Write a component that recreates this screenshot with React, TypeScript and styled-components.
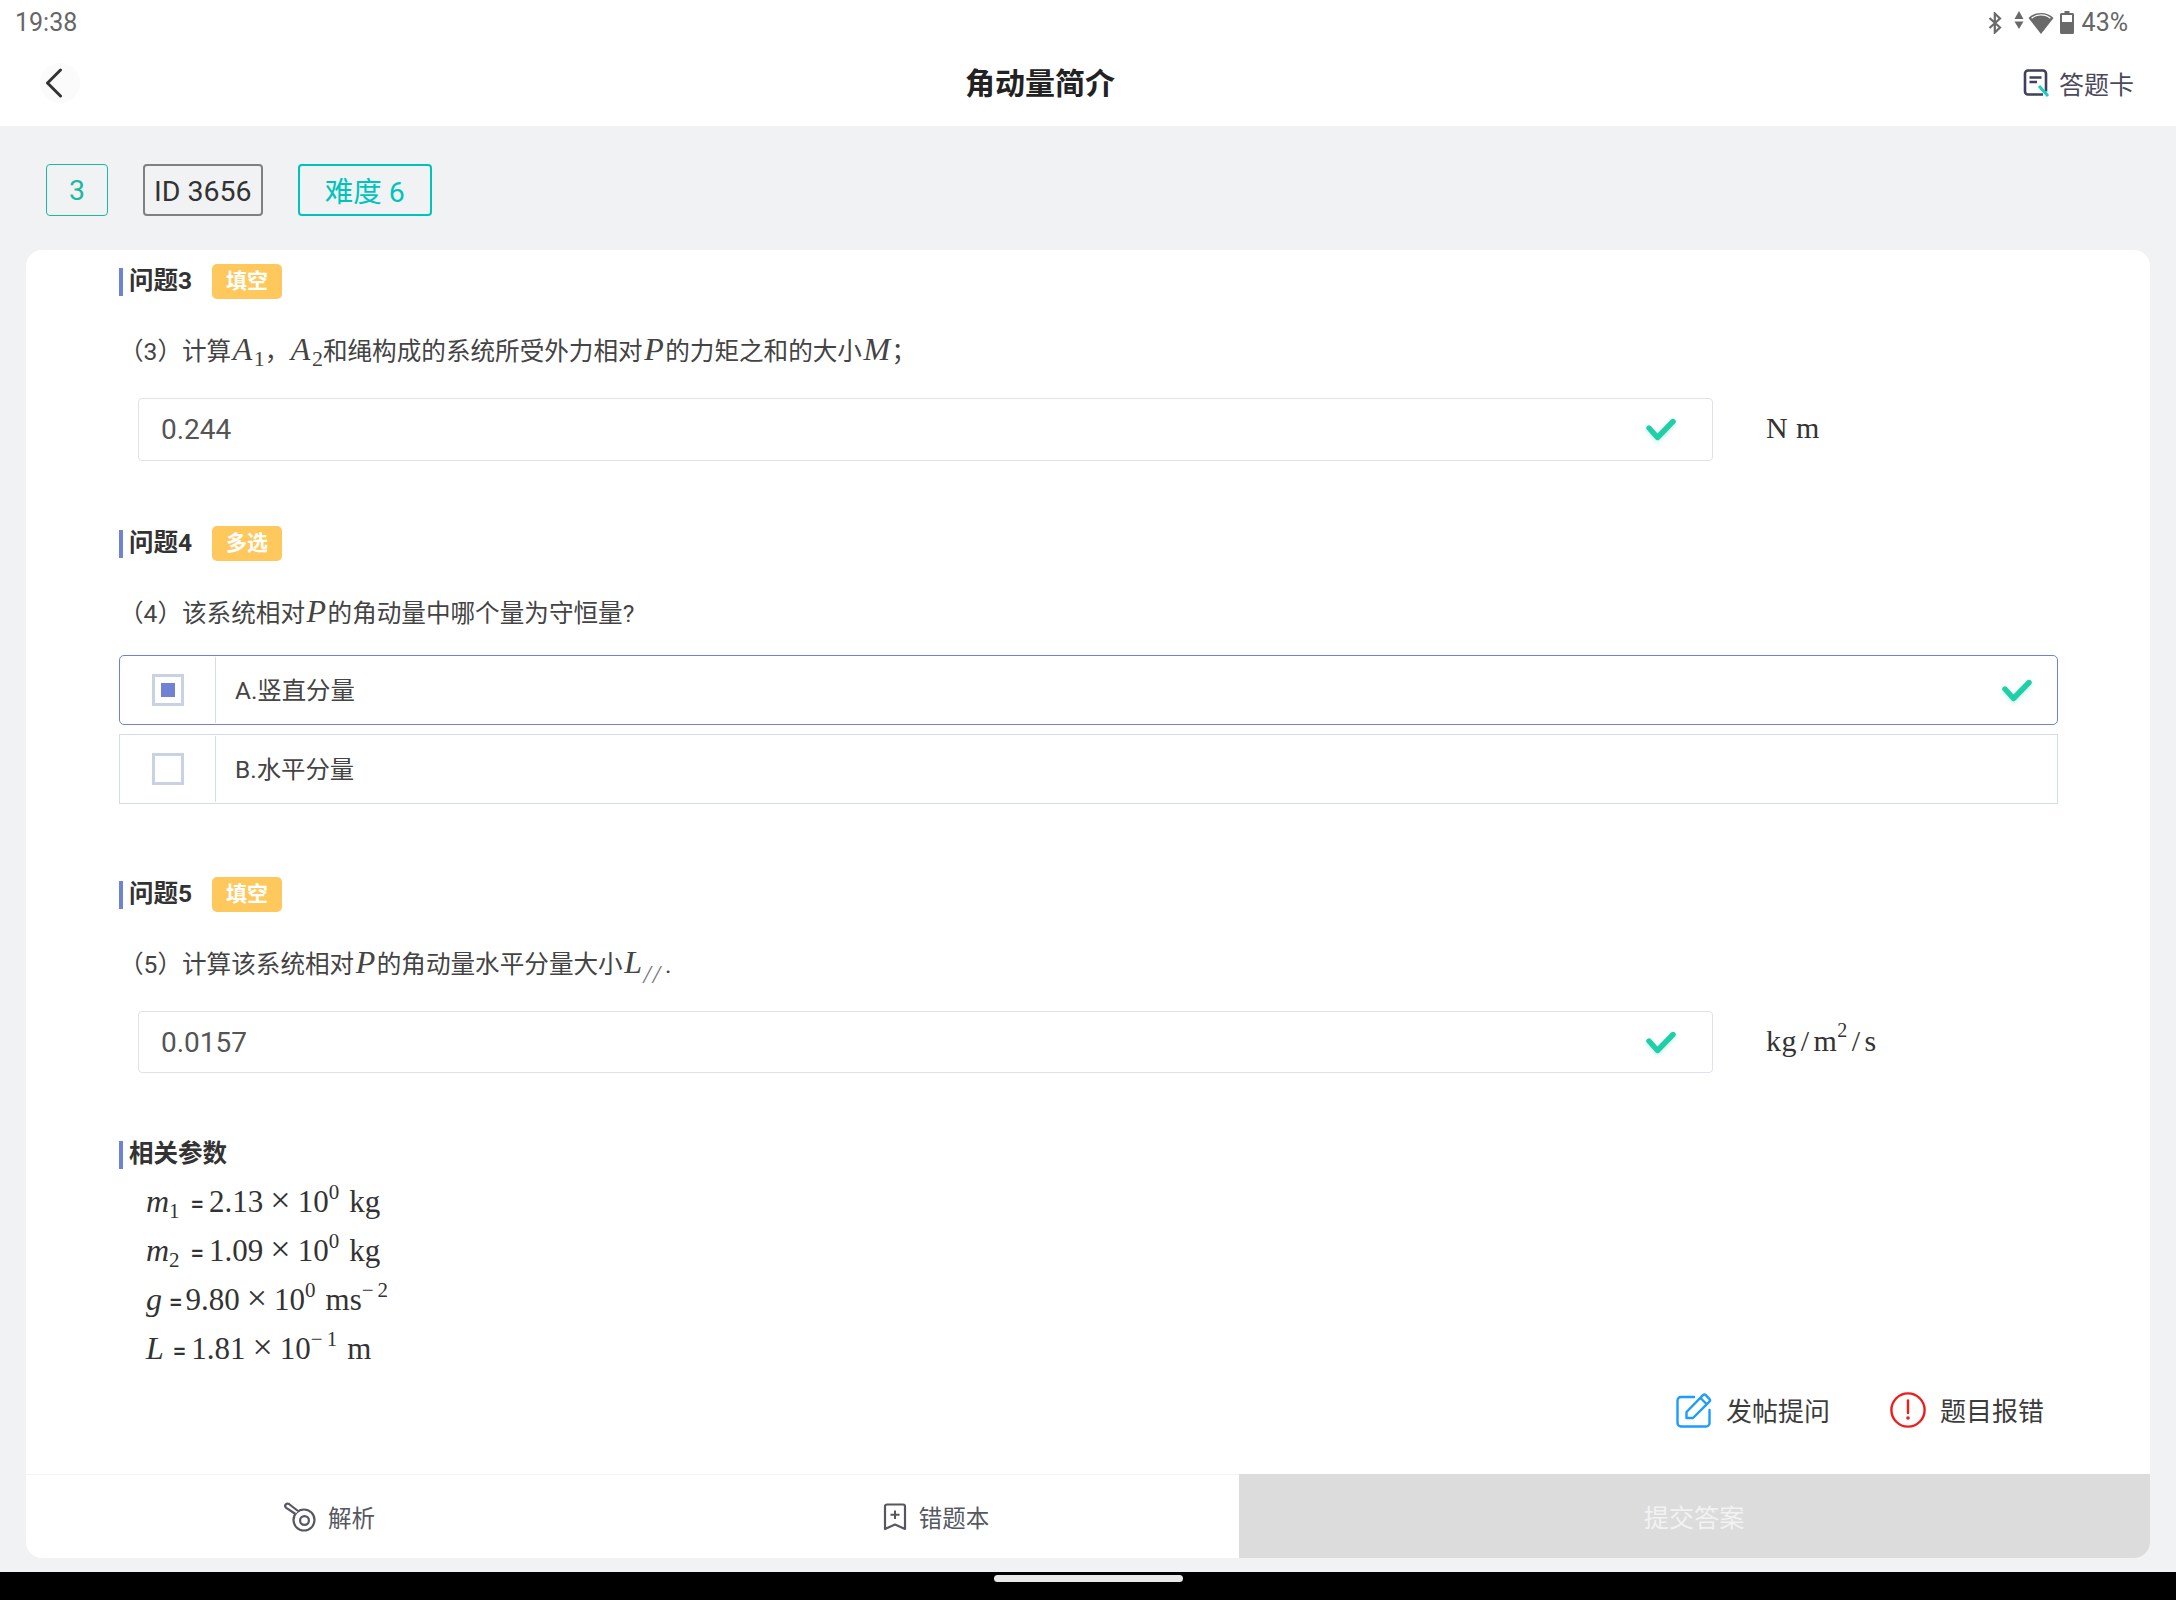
import React from "react";
import styled, { createGlobalStyle } from "styled-components";

const sansStack = `Roboto, "Noto Sans CJK SC", sans-serif`;
const serifStack = `"Liberation Serif", "Noto Sans CJK SC", serif`;
const accent = "#6f82d4";
const lineGrey = "#d5dbe8";

const GlobalStyle = createGlobalStyle`
  html, body {
    margin: 0;
    padding: 0;
    background: #f1f2f4;
  }
  body {
    font-family: ${sansStack};
    color: #444;
  }
  * {
    box-sizing: border-box;
  }
`;

const Page = styled.div`
  width: 2176px;
  height: 1600px;
  display: flex;
  flex-direction: column;
  overflow: hidden;
`;

const Top = styled.header`
  background: #fff;
  height: 126px;
  flex-shrink: 0;
`;

const StatusBar = styled.div`
  height: 40px;
  padding: 5px 48px 0 15px;
  display: flex;
  align-items: center;
  justify-content: space-between;
  font-size: 25px;
  color: #666;
`;

const StatusIcons = styled.div`
  display: flex;
  align-items: center;
`;

const StatusText = styled.span`
  margin-left: 8px;
`;

const NavRow = styled.div`
  height: 86px;
  display: grid;
  grid-template-columns: 1fr auto 1fr;
  align-items: center;
  padding: 0 42px 0 40px;
`;

const BackButton = styled.div`
  width: 40px;
  height: 40px;
  border-radius: 50%;
  background: #fbfbfb;
  display: flex;
  align-items: center;
  padding-left: 5px;
`;

const Title = styled.h1`
  margin: 2px 82px 0 -12px;
  font-size: 30px;
  line-height: 40px;
  font-weight: 700;
  color: #222;
`;

const CardLink = styled.div`
  justify-self: end;
  display: flex;
  align-items: center;
  gap: 9px;
  font-size: 25px;
  color: #4a4a5c;
`;

const Main = styled.main`
  flex: 1;
  display: flex;
  flex-direction: column;
  padding: 38px 26px 14px;
  min-height: 0;
`;

const Tags = styled.div`
  display: flex;
  gap: 35px;
  padding-left: 20px;
  margin-bottom: 34px;
`;

const Tag = styled.div<{ $color: string; $border: number; $pad: number; $top?: number; $bottom?: number }>`
  height: 52px;
  padding: ${(p) => p.$top ?? 0}px ${(p) => p.$pad}px ${(p) => p.$bottom ?? 0}px;
  display: flex;
  align-items: center;
  border: ${(p) => p.$border}px solid ${(p) => (p.$color === "#333" ? "#808080" : p.$color)};
  border-radius: 4px;
  color: ${(p) => p.$color};
  font-size: 28.5px;
`;

const Card = styled.section`
  flex: 1;
  min-height: 0;
  display: flex;
  flex-direction: column;
  background: #fff;
  border-radius: 16px;
  overflow: hidden;
  padding-top: 14px;
`;

const Block = styled.div<{ $top?: number }>`
  margin: ${(p) => p.$top ?? 0}px 92px 0 93px;
`;

const Heading = styled.div`
  height: 35px;
  display: flex;
  align-items: center;
  gap: 20px;
`;

const HeadingText = styled.h2`
  margin: 0;
  height: 28px;
  border-left: 4px solid ${accent};
  padding-left: 6px;
  font-size: 24.5px;
  line-height: 25px;
  font-weight: 700;
  color: #333;
`;

const Badge = styled.span`
  width: 70px;
  height: 35px;
  border-radius: 5px;
  background: #ffc85c;
  color: #fff;
  font-size: 21px;
  font-weight: 700;
  padding-bottom: 5px;
  display: flex;
  align-items: center;
  justify-content: center;
`;

const Prompt = styled.p`
  margin: 33px 0 0;
  height: 34px;
  font-size: 24.6px;
  line-height: 34px;
  color: #444;
  white-space: nowrap;
`;

const MathVar = styled.i`
  font-family: ${serifStack};
  font-size: 32px;
  font-style: italic;
  margin: 0 1.5px;
`;

const Sub = styled.sub`
  font-family: ${serifStack};
  font-size: 22px;
  font-style: normal;
  line-height: 0;
  vertical-align: -6px;
`;

const ParallelSub = styled(Sub)`
  font-style: italic;
  color: #777;
  font-size: 26px;
  vertical-align: -10px;
  letter-spacing: 2px;
  margin-right: 3px;
`;

const AnswerRow = styled.div`
  display: flex;
  align-items: center;
  margin: 32px 0 0 19px;
`;

const AnswerBox = styled.div<{ $height: number }>`
  width: 1575px;
  height: ${(p) => p.$height}px;
  border: 1px solid #dfe2e8;
  border-radius: 4px;
  padding: 0 36px 0 22px;
  display: flex;
  align-items: center;
  justify-content: space-between;
  font-size: 28px;
  color: #555;
`;

const Unit = styled.div`
  margin-left: 53px;
  margin-bottom: 3px;
  font-family: ${serifStack};
  font-size: 30px;
  letter-spacing: 0.4px;
  color: #333;
`;

const UnitSup = styled.sup`
  font-size: 20px;
  line-height: 0;
  vertical-align: 14px;
`;

const Slash = styled.span`
  margin: 0 4px;
`;

const Options = styled.div`
  margin-top: 27px;
  display: flex;
  flex-direction: column;
  gap: 9px;
`;

const Option = styled.div<{ $active?: boolean }>`
  height: 70px;
  display: flex;
  align-items: center;
  border: 1px solid ${(p) => (p.$active ? accent : lineGrey)};
  border-radius: ${(p) => (p.$active ? 5 : 0)}px;
  font-size: 24.4px;
  color: #444;
`;

const OptionMark = styled.div`
  width: 96px;
  height: 66px;
  flex-shrink: 0;
  border-right: 1px solid ${lineGrey};
  display: flex;
  align-items: center;
  justify-content: center;
`;

const Checkbox = styled.span`
  width: 32px;
  height: 32px;
  border: 3.5px solid #c9d2e2;
  display: flex;
  align-items: center;
  justify-content: center;
`;

const CheckboxFill = styled.span`
  width: 14px;
  height: 14px;
  background: ${accent};
`;

const OptionLabel = styled.span`
  flex: 1;
  padding: 0 0 4px 19px;
`;

const OptionCheck = styled.span`
  display: flex;
  margin-right: 25px;
`;

const Params = styled.div`
  margin: 8px 0 0 27px;
`;

const ParamLine = styled.div`
  height: 49px;
  line-height: 49px;
  font-family: ${serifStack};
  font-size: 31px;
  color: #333;
  white-space: nowrap;
`;

const ParamVar = styled.i`
  font-size: 32px;
`;

const Equals = styled.span<{ $left: number; $right: number }>`
  font-family: ${sansStack};
  font-size: 24px;
  font-weight: 500;
  margin: 0 ${(p) => p.$right}px 0 ${(p) => p.$left}px;
`;

const Times = styled.span`
  font-size: 36px;
  line-height: 0;
  margin: 0 7px;
`;

const Sup = styled.sup`
  font-size: 21px;
  line-height: 0;
  vertical-align: 13px;
`;

const ExponentMinus = styled.span`
  letter-spacing: 4px;
`;

const ParamSub = styled.sub`
  font-size: 21px;
  line-height: 0;
  vertical-align: -6px;
`;

const ParamUnit = styled.span`
  margin-left: 10px;
`;

const Actions = styled.div`
  margin-top: 19px;
  padding-right: 106px;
  display: flex;
  justify-content: flex-end;
  gap: 60px;
`;

const ActionItem = styled.div`
  display: flex;
  align-items: center;
  gap: 14px;
  height: 36px;
  font-size: 26px;
  color: #3c3c3c;
`;

const ActionLabel = styled.span`
  margin-bottom: 2px;
`;

const BottomBar = styled.div`
  margin-top: auto;
  height: 84px;
  flex-shrink: 0;
  display: grid;
  grid-template-columns: 606px 607px 1fr;
  border-top: 1px solid #f1f4f8;
`;

const BottomItem = styled.div`
  display: flex;
  align-items: center;
  justify-content: center;
  gap: 12px;
  padding-left: 1px;
  font-size: 23.5px;
  color: #55585f;
`;

const SubmitButton = styled.div`
  margin-top: -1px;
  background: #dcdcdc;
  color: #f2f2f2;
  font-size: 25.2px;
  display: flex;
  align-items: center;
  justify-content: center;
  padding-right: 1px;
`;

const NavBar = styled.div`
  height: 28px;
  flex-shrink: 0;
  background: #000;
  padding-top: 3px;
  display: flex;
  justify-content: center;
`;

const HomePill = styled.div`
  width: 189px;
  height: 7px;
  border-radius: 4px;
  background: #e8e8e8;
`;

const ShadowSvg = styled.svg`
  filter: drop-shadow(0 2px 2px rgba(31, 207, 168, 0.25));
  display: block;
`;

const CheckMark = () => (
  <ShadowSvg width="30" height="23" viewBox="0 0 30 23">
    <polyline points="3,10 11.5,19.5 27,3.5" fill="none" stroke="#1fcfa8" strokeWidth="5.4" strokeLinecap="round" strokeLinejoin="round" />
  </ShadowSvg>
);

const BluetoothIcon = () => (
  <svg width="14" height="22" viewBox="0 0 14 22">
    <polyline points="1.5,6 12,15.5 6.8,20.5 6.8,1.5 12,6.5 1.5,16" fill="none" stroke="#6a6a6a" strokeWidth="2.2" />
  </svg>
);

const DataArrows = () => (
  <svg width="10" height="18" viewBox="0 0 10 18" style={{ marginLeft: 12, marginTop: -5 }}>
    <path d="M5 0 L9.5 8 H0.5 Z M0.5 10.5 H9.5 L5 18 Z" fill="#6a6a6a" />
  </svg>
);

const WifiIcon = () => (
  <svg width="26" height="22" viewBox="0 0 26 22" style={{ marginLeft: 4 }}>
    <path d="M0.5 6 C7 -0.8 19 -0.8 25.5 6 L13 22 Z" fill="#6a6a6a" />
    <path d="M3.6 6.2 C9 1.8 17 1.8 22.4 6.2" fill="none" stroke="#fff" strokeWidth="1.2" />
  </svg>
);

const BatteryIcon = () => (
  <svg width="14" height="23" viewBox="0 0 14 23" style={{ marginLeft: 6 }}>
    <path d="M4.5 0 H9.5 V2 H12.5 A1.5 1.5 0 0 1 14 3.5 V21.5 A1.5 1.5 0 0 1 12.5 23 H1.5 A1.5 1.5 0 0 1 0 21.5 V3.5 A1.5 1.5 0 0 1 1.5 2 H4.5 Z" fill="#6a6a6a" />
    <rect x="2" y="4" width="10" height="7" fill="#fff" />
  </svg>
);

const BackChevron = () => (
  <svg width="18" height="30" viewBox="0 0 18 30">
    <polyline points="15.5,2 2.5,15 15.5,28" fill="none" stroke="#333" strokeWidth="3" strokeLinecap="round" strokeLinejoin="round" />
  </svg>
);

const AnswerCardIcon = () => (
  <svg width="27" height="28" viewBox="0 0 27 28">
    <path d="M20 25.5 H5 A3 3 0 0 1 2 22.5 V4.5 A3 3 0 0 1 5 1.5 H20 A3 3 0 0 1 23 4.5 V22.5" fill="none" stroke="#3f3f5e" strokeWidth="2.6" />
    <path d="M6.5 8.5 H18.5 M6.5 13 H14" stroke="#3f3f5e" strokeWidth="2.4" />
    <path d="M16 17 L25 27" stroke="#17cfc0" strokeWidth="3" />
  </svg>
);

const PostIcon = () => (
  <svg width="36" height="36" viewBox="0 0 36 36">
    <path d="M18 5 H5 A3.5 3.5 0 0 0 1.5 8.5 V31 A3.5 3.5 0 0 0 5 34.5 H30 A3.5 3.5 0 0 0 33.5 31 V18" fill="none" stroke="#1e9bff" strokeWidth="2.4" strokeLinecap="round" />
    <path d="M10.5 20 L27 3.2 A2 2 0 0 1 29.8 3.2 L33.4 6.8 A2 2 0 0 1 33.4 9.6 L17 26 H10.5 Z M24.5 6 L30.5 12" fill="none" stroke="#1e9bff" strokeWidth="2.4" strokeLinejoin="round" />
  </svg>
);

const ErrorIcon = () => (
  <svg width="36" height="36" viewBox="0 0 36 36">
    <circle cx="18" cy="18" r="16.6" fill="none" stroke="#ee1c1c" strokeWidth="2.4" />
    <path d="M18 8.5 V21" stroke="#ee1c1c" strokeWidth="2.4" strokeLinecap="round" />
    <circle cx="18" cy="26" r="1.8" fill="#ee1c1c" />
  </svg>
);

const AnalysisIcon = () => (
  <svg width="32" height="30" viewBox="0 0 32 30">
    <circle cx="20" cy="18" r="10.5" fill="none" stroke="#55585f" strokeWidth="2.2" />
    <circle cx="20.5" cy="18.5" r="4.4" fill="none" stroke="#55585f" strokeWidth="2.2" />
    <path d="M11.5 12 L2.2 5.8 A2.2 2.2 0 0 1 5 2 L14 9" fill="#fff" stroke="#55585f" strokeWidth="2.2" strokeLinejoin="round" />
  </svg>
);

const WrongBookIcon = () => (
  <svg width="24" height="28" viewBox="0 0 24 28">
    <path d="M2 3.5 A2 2 0 0 1 4 1.5 H20 A2 2 0 0 1 22 3.5 V26 L12 21.5 L2 26 Z" fill="none" stroke="#55585f" strokeWidth="2.2" strokeLinejoin="round" />
    <path d="M12 7.5 V16 M7.5 11.8 H16.5" stroke="#55585f" strokeWidth="2" />
  </svg>
);

export default function App() {
  return (
    <Page>
      <GlobalStyle />
      <Top>
        <StatusBar>
          <span>19:38</span>
          <StatusIcons>
            <BluetoothIcon />
            <DataArrows />
            <WifiIcon />
            <BatteryIcon />
            <StatusText>43%</StatusText>
          </StatusIcons>
        </StatusBar>
        <NavRow>
          <BackButton>
            <BackChevron />
          </BackButton>
          <Title>角动量简介</Title>
          <CardLink>
            <AnswerCardIcon />
            答题卡
          </CardLink>
        </NavRow>
      </Top>

      <Main>
        <Tags>
          <Tag $color="#1db99c" $border={1} $pad={22}>3</Tag>
          <Tag $color="#333" $border={2} $pad={9} $top={2}>ID 3656</Tag>
          <Tag $color="#00c4bc" $border={2} $pad={25} $bottom={2}>难度 6</Tag>
        </Tags>

        <Card>
          <Block>
            <Heading>
              <HeadingText>问题3</HeadingText>
              <Badge>填空</Badge>
            </Heading>
            <Prompt>
              （3）计算<MathVar>A</MathVar><Sub>1</Sub>，<MathVar>A</MathVar><Sub>2</Sub>和绳构成的系统所受外力相对<MathVar>P</MathVar>的力矩之和的大小<MathVar>M</MathVar>；
            </Prompt>
            <AnswerRow>
              <AnswerBox $height={63}>
                0.244
                <CheckMark />
              </AnswerBox>
              <Unit>N m</Unit>
            </AnswerRow>
          </Block>

          <Block $top={65}>
            <Heading>
              <HeadingText>问题4</HeadingText>
              <Badge>多选</Badge>
            </Heading>
            <Prompt>
              （4）该系统相对<MathVar>P</MathVar>的角动量中哪个量为守恒量?
            </Prompt>
            <Options>
              <Option $active>
                <OptionMark>
                  <Checkbox>
                    <CheckboxFill />
                  </Checkbox>
                </OptionMark>
                <OptionLabel>A.竖直分量</OptionLabel>
                <OptionCheck>
                  <CheckMark />
                </OptionCheck>
              </Option>
              <Option>
                <OptionMark>
                  <Checkbox />
                </OptionMark>
                <OptionLabel>B.水平分量</OptionLabel>
              </Option>
            </Options>
          </Block>

          <Block $top={73}>
            <Heading>
              <HeadingText>问题5</HeadingText>
              <Badge>填空</Badge>
            </Heading>
            <Prompt>
              （5）计算该系统相对<MathVar>P</MathVar>的角动量水平分量大小<MathVar>L</MathVar><ParallelSub>//</ParallelSub>.
            </Prompt>
            <AnswerRow>
              <AnswerBox $height={62}>
                0.0157
                <CheckMark />
              </AnswerBox>
              <Unit>
                kg<Slash>/</Slash>m<UnitSup>2</UnitSup><Slash>/</Slash>s
              </Unit>
            </AnswerRow>
          </Block>

          <Block $top={68}>
            <HeadingText>相关参数</HeadingText>
            <Params>
              <ParamLine>
                <ParamVar>m</ParamVar><ParamSub>1</ParamSub>
                <Equals $left={11} $right={5}>=</Equals>2.13<Times>×</Times>10<Sup>0</Sup>
                <ParamUnit>kg</ParamUnit>
              </ParamLine>
              <ParamLine>
                <ParamVar>m</ParamVar><ParamSub>2</ParamSub>
                <Equals $left={11} $right={5}>=</Equals>1.09<Times>×</Times>10<Sup>0</Sup>
                <ParamUnit>kg</ParamUnit>
              </ParamLine>
              <ParamLine>
                <ParamVar>g</ParamVar>
                <Equals $left={7} $right={3}>=</Equals>9.80<Times>×</Times>10<Sup>0</Sup>
                <ParamUnit>ms<Sup><ExponentMinus>−</ExponentMinus>2</Sup></ParamUnit>
              </ParamLine>
              <ParamLine>
                <ParamVar>L</ParamVar>
                <Equals $left={9} $right={5}>=</Equals>1.81<Times>×</Times>10<Sup><ExponentMinus>−</ExponentMinus>1</Sup>
                <ParamUnit>m</ParamUnit>
              </ParamLine>
            </Params>
          </Block>

          <Actions>
            <ActionItem>
              <PostIcon />
              <ActionLabel>发帖提问</ActionLabel>
            </ActionItem>
            <ActionItem>
              <ErrorIcon />
              <ActionLabel>题目报错</ActionLabel>
            </ActionItem>
          </Actions>

          <BottomBar>
            <BottomItem>
              <AnalysisIcon />
              解析
            </BottomItem>
            <BottomItem>
              <WrongBookIcon />
              错题本
            </BottomItem>
            <SubmitButton>提交答案</SubmitButton>
          </BottomBar>
        </Card>
      </Main>

      <NavBar>
        <HomePill />
      </NavBar>
    </Page>
  );
}
